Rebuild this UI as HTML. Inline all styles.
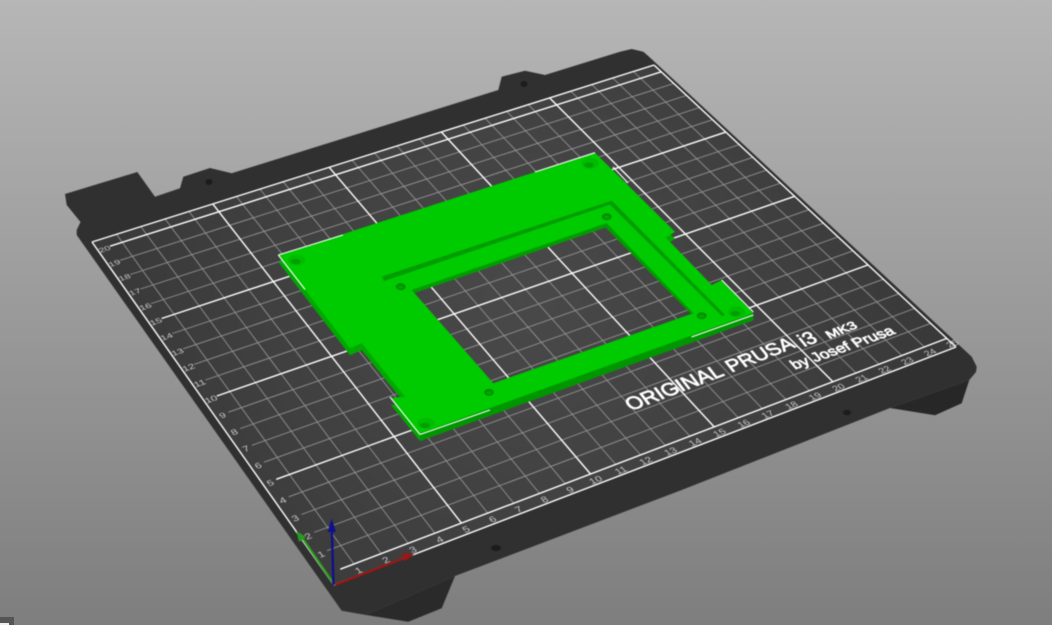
<!DOCTYPE html>
<html><head><meta charset="utf-8"><style>
html,body{margin:0;padding:0;width:1052px;height:625px;overflow:hidden;background:#999}
svg{display:block;position:absolute;left:0;top:0}
#s{filter:blur(.4px)}
#c{position:absolute;left:0;top:617px;width:14px;height:8px;background:#555}
#c i{position:absolute;left:0;top:6px;width:9px;height:2px;background:#eee}
text{font-family:"Liberation Sans",sans-serif;fill:#fff}
.l text{font-size:4px;text-anchor:middle;fill:#e4e4e4;opacity:.82}
.b text{stroke:#fff;stroke-width:.36}
.t line{stroke:#969696;stroke-width:.85}
.k line{stroke:#fff;stroke-width:1.4}
</style></head><body>
<svg width="1052" height="625" viewBox="0 0 1052 625" xmlns="http://www.w3.org/2000/svg">
<defs>
<linearGradient id="bg" x1="0" y1="0" x2="0" y2="1"><stop offset="0" stop-color="#b6b6b6"/><stop offset="1" stop-color="#7e7e7e"/></linearGradient>
<radialGradient id="gr" gradientUnits="userSpaceOnUse" cx="520" cy="300" r="420"><stop offset="0" stop-color="#494949"/><stop offset=".6" stop-color="#404040"/><stop offset="1" stop-color="#393939"/></radialGradient>
</defs>
<rect width="1052" height="625" fill="url(#bg)"/>
<g id="s">
<!-- feet -->
<polygon points="455,576 441.7,608.3 408.3,621.7 366,615" fill="#2a2a2a"/>
<polygon points="890,408 969.3,380 961.7,403.3 935,415.3" fill="#272727"/>
<!-- plate -->
<polygon fill="#303030" points="65,194 137.3,172 155,196.7 180,188.3 183.3,176.7 210,168 231.7,173.3 498.3,90 501.7,76.7 525,70.7 545,75 620,51.7 631.7,49 643.3,51.7 648,55.7 971.7,356.7 976.7,366.7 976,372 969.3,380 890,408 681.7,490 455,576 366,615 341.7,610.7 76.7,235 76.7,230 80.5,222 66.7,205"/>
<polygon points="92,242 654,65 956,347 334,585" fill="url(#gr)"/>
<g fill="#1c1c1c"><ellipse cx="524" cy="84" rx="3.5" ry="3"/><ellipse cx="209" cy="182" rx="3.5" ry="3"/><ellipse cx="847" cy="412.5" rx="4" ry="2.8"/><ellipse cx="496" cy="548" rx="5" ry="3"/></g>
<!-- thin horizontal lines -->
<g class="t">
<line x1="327.1" y1="550.7" x2="930.7" y2="323.3"/><line x1="314.1" y1="532.4" x2="914.7" y2="308.4"/><line x1="301.3" y1="514.5" x2="899" y2="293.7"/><line x1="288.7" y1="496.8" x2="883.4" y2="279.2"/>
<line x1="264" y1="462.2" x2="853" y2="250.8"/><line x1="251.9" y1="445.3" x2="838.1" y2="236.9"/><line x1="240.1" y1="428.6" x2="823.4" y2="223.2"/><line x1="228.3" y1="412.2" x2="808.9" y2="209.7"/>
<line x1="205.4" y1="380" x2="780.5" y2="183.1"/><line x1="194.2" y1="364.3" x2="766.5" y2="170.1"/><line x1="183.2" y1="348.8" x2="752.8" y2="157.3"/><line x1="172.3" y1="333.5" x2="739.2" y2="144.6"/>
<line x1="151" y1="303.6" x2="712.6" y2="119.7"/><line x1="140.5" y1="289" x2="699.5" y2="107.5"/><line x1="130.2" y1="274.5" x2="686.6" y2="95.4"/><line x1="120.1" y1="260.3" x2="673.8" y2="83.5"/>
<!-- thin vertical lines -->
<line x1="116.5" y1="234.3" x2="354" y2="564"/><line x1="140.9" y1="226.6" x2="381.2" y2="553.6"/><line x1="165.1" y1="219" x2="408.2" y2="543.4"/><line x1="189" y1="211.4" x2="434.9" y2="533.2"/>
<line x1="236.5" y1="196.5" x2="487.7" y2="513.1"/><line x1="259.9" y1="189.1" x2="513.7" y2="503.2"/><line x1="283.2" y1="181.8" x2="539.5" y2="493.4"/><line x1="306.3" y1="174.5" x2="565.1" y2="483.7"/>
<line x1="352" y1="160.1" x2="615.7" y2="464.4"/><line x1="374.6" y1="153" x2="640.6" y2="454.9"/><line x1="397" y1="145.9" x2="665.4" y2="445.5"/><line x1="419.3" y1="138.9" x2="689.9" y2="436.2"/>
<line x1="463.3" y1="125" x2="738.3" y2="417.8"/><line x1="485.1" y1="118.2" x2="762.3" y2="408.7"/><line x1="506.8" y1="111.4" x2="786" y2="399.6"/><line x1="528.3" y1="104.6" x2="809.5" y2="390.7"/>
<line x1="570.8" y1="91.2" x2="856" y2="373"/><line x1="591.8" y1="84.6" x2="879" y2="364.2"/><line x1="612.7" y1="78" x2="901.8" y2="355.6"/><line x1="633.4" y1="71.5" x2="924.4" y2="347"/>
</g>
<!-- thick lines -->
<g class="k">
<line x1="276.2" y1="479.3" x2="868.1" y2="264.9"/><line x1="216.8" y1="396" x2="794.6" y2="196.3"/><line x1="161.6" y1="318.5" x2="725.8" y2="132.1"/>
<line x1="212.8" y1="203.9" x2="461.4" y2="523.1"/><line x1="329.2" y1="167.3" x2="590.5" y2="474"/><line x1="441.4" y1="132" x2="714.2" y2="426.9"/><line x1="549.6" y1="97.9" x2="832.9" y2="381.8"/>
<line x1="340.3" y1="569.2" x2="946.8" y2="338.4"/><line x1="110" y1="246.2" x2="661.2" y2="71.8"/>
<line x1="92" y1="242" x2="654" y2="65"/><line x1="654" y1="65" x2="956" y2="347"/><line x1="956" y1="347" x2="334" y2="585"/><line x1="92" y1="242" x2="334" y2="585"/>
</g>
<!-- x labels -->
<g class="l">
<text transform="matrix(2.68 -1.03 1.42 1.87 357.8 569.2)" y="2">1</text>
<text transform="matrix(2.68 -1.03 1.42 1.87 385 558.8)" y="2">2</text>
<text transform="matrix(2.68 -1.03 1.42 1.87 412 548.5)" y="2">3</text>
<text transform="matrix(2.68 -1.03 1.42 1.87 438.8 538.3)" y="2">4</text>
<text transform="matrix(2.68 -1.03 1.42 1.87 465.3 528.1)" y="2">5</text>
<text transform="matrix(2.58 -.99 1.48 1.79 491.6 518.1)" y="2">6</text>
<text transform="matrix(2.58 -.99 1.48 1.79 517.7 508.2)" y="2">7</text>
<text transform="matrix(2.58 -.99 1.48 1.79 543.5 498.3)" y="2">8</text>
<text transform="matrix(2.58 -.99 1.48 1.79 569.2 488.6)" y="2">9</text>
<text transform="matrix(2.58 -.99 1.48 1.79 594.6 478.8)" y="2">10</text>
<text transform="matrix(2.48 -.95 1.54 1.72 619.9 469.2)" y="2">11</text>
<text transform="matrix(2.48 -.95 1.54 1.72 644.8 459.7)" y="2">12</text>
<text transform="matrix(2.48 -.95 1.54 1.72 669.6 450.2)" y="2">13</text>
<text transform="matrix(2.48 -.95 1.54 1.72 694.2 440.9)" y="2">14</text>
<text transform="matrix(2.48 -.95 1.54 1.72 718.5 431.6)" y="2">15</text>
<text transform="matrix(2.38 -.91 1.6 1.65 742.7 422.4)" y="2">16</text>
<text transform="matrix(2.38 -.91 1.6 1.65 766.7 413.3)" y="2">17</text>
<text transform="matrix(2.38 -.91 1.6 1.65 790.4 404.2)" y="2">18</text>
<text transform="matrix(2.38 -.91 1.6 1.65 814 395.2)" y="2">19</text>
<text transform="matrix(2.38 -.91 1.6 1.65 837.4 386.3)" y="2">20</text>
<text transform="matrix(2.28 -.87 1.66 1.57 860.5 377.4)" y="2">21</text>
<text transform="matrix(2.28 -.87 1.66 1.57 883.5 368.6)" y="2">22</text>
<text transform="matrix(2.28 -.87 1.66 1.57 906.3 359.9)" y="2">23</text>
<text transform="matrix(2.28 -.87 1.66 1.57 929 351.3)" y="2">24</text>
<text transform="matrix(2.28 -.87 1.66 1.57 951.4 342.7)" y="2">25</text>
<!-- y labels -->
<text transform="matrix(2.72 -1.03 1.29 1.83 320.3 553.2)" y="2">1</text>
<text transform="matrix(2.72 -1.03 1.29 1.83 307.3 535)" y="2">2</text>
<text transform="matrix(2.72 -1.03 1.29 1.83 294.5 517)" y="2">3</text>
<text transform="matrix(2.72 -1.03 1.29 1.83 281.9 499.2)" y="2">4</text>
<text transform="matrix(2.66 -.97 1.22 1.73 269.6 481.8)" y="2">5</text>
<text transform="matrix(2.66 -.97 1.22 1.73 257.4 464.5)" y="2">6</text>
<text transform="matrix(2.66 -.97 1.22 1.73 245.3 447.6)" y="2">7</text>
<text transform="matrix(2.66 -.97 1.22 1.73 233.5 430.9)" y="2">8</text>
<text transform="matrix(2.6 -.91 1.15 1.63 221.8 414.4)" y="2">9</text>
<text transform="matrix(2.6 -.91 1.15 1.63 210.3 398.2)" y="2">10</text>
<text transform="matrix(2.6 -.91 1.15 1.63 199 382.2)" y="2">11</text>
<text transform="matrix(2.6 -.91 1.15 1.63 187.8 366.5)" y="2">12</text>
<text transform="matrix(2.54 -.86 1.08 1.53 176.8 351)" y="2">13</text>
<text transform="matrix(2.54 -.86 1.08 1.53 165.9 335.7)" y="2">14</text>
<text transform="matrix(2.54 -.86 1.08 1.53 155.2 320.6)" y="2">15</text>
<text transform="matrix(2.54 -.86 1.08 1.53 144.7 305.7)" y="2">16</text>
<text transform="matrix(2.48 -.8 1.01 1.44 134.3 291)" y="2">17</text>
<text transform="matrix(2.48 -.8 1.01 1.44 124 276.5)" y="2">18</text>
<text transform="matrix(2.48 -.8 1.01 1.44 113.9 262.3)" y="2">19</text>
<text transform="matrix(2.48 -.8 1.01 1.44 103.9 248.2)" y="2">20</text>
</g>
<!-- printed sheet text -->
<g class="b">
<text transform="matrix(2.1 -.8 1.3 1.68 631 411)" font-size="9.4">ORIGINAL</text>
<text transform="matrix(2 -.79 1.3 1.6 731.5 372.5)" font-size="9.4">PRUSA</text>
<text transform="matrix(2 -.76 1.3 1.6 804 347)" font-size="9.6">i3</text>
<text transform="matrix(2.2 -.88 1.25 1.5 829.5 339)" font-size="6.4">MK3</text>
<text transform="matrix(2.04 -.73 1.3 1.5 795 369.5)" font-size="7.5">by Josef Prusa</text>
</g>
<!-- green part: sides -->
<path fill="#00a800" fill-rule="evenodd" d="M278.3,262 L595,159.7 L675,238.7 L666,244.7 L711.7,292 L721.7,287 L753.3,320.3 L420,441 L391,405 L405,403.7 L361.7,350.3 L350,355.3 Z M411.7,290 L606.7,223.3 L693.3,313.3 L493.3,383.3 Z"/>
<polygon points="753.3,313.3 753.3,320.3 420,441 420,433.3" fill="#009600"/>
<!-- green part: top -->
<path fill="#00ca00" fill-rule="evenodd" d="M278.3,255 L595,152.7 L675,231.7 L666,237.7 L711.7,285 L721.7,280 L753.3,313.3 L420,433.3 L391,398 L405,396.7 L361.7,343.3 L350,348.3 Z M411.7,290 L606.7,223.3 L693.3,313.3 L493.3,383.3 Z"/>
<!-- window walls and groove -->
<polygon points="411.7,290 606.7,223.3 693.3,313.3 691,314 605.5,227.5 414.5,293" fill="#009c00"/>
<polygon points="381.7,276.7 611.7,200.7 725,315 722,316 610,204.5 384,281" fill="#009c00"/>
<!-- holes -->
<g fill="#00bc00">
<ellipse cx="296.7" cy="260" rx="8.5" ry="5.5"/><ellipse cx="590" cy="163.3" rx="8.5" ry="5.5"/><ellipse cx="736.7" cy="311.7" rx="8.5" ry="5.5"/><ellipse cx="426" cy="423.5" rx="8.5" ry="5.5"/>
</g>
<g fill="#00a000">
<ellipse cx="295.5" cy="261.5" rx="5" ry="2.6"/><ellipse cx="589" cy="165" rx="5" ry="2.6"/><ellipse cx="735.5" cy="313.5" rx="5" ry="2.6"/><ellipse cx="425" cy="425.5" rx="5" ry="2.6"/>
</g>
<g fill="#008c00">
<ellipse cx="400.7" cy="286.7" rx="4.8" ry="3.4"/><ellipse cx="606.7" cy="216.7" rx="4.8" ry="3.4"/><ellipse cx="701.7" cy="315.7" rx="4.8" ry="3.4"/><ellipse cx="489" cy="392.3" rx="4.8" ry="3.4"/>
</g>
<g fill="#00aa00">
<ellipse cx="400.7" cy="287.2" rx="2.8" ry="1.7"/><ellipse cx="606.7" cy="217.2" rx="2.8" ry="1.7"/><ellipse cx="701.7" cy="316.2" rx="2.8" ry="1.7"/><ellipse cx="489" cy="392.8" rx="2.8" ry="1.7"/>
</g>
<!-- white edge sparkles -->
<g stroke="#fff" stroke-width="1.1" fill="none">
<path d="M278.3,255 L343,235"/><path d="M535,172 L595,152.7"/><path d="M278.3,255 L305,289.5"/><path d="M613,167 L628,183"/>
<path d="M691.5,337 L753.3,315"/><path d="M420,434.5 L490,410"/><path d="M390,397 L420,434.5"/><path d="M721.7,280 L753.3,312"/>
</g>
<!-- axes -->
<line x1="334" y1="584" x2="301" y2="536" stroke="#2a9a1e" stroke-width="2.2"/>
<polygon points="296.5,531 306,537 299,542" fill="#2a9a1e"/>
<line x1="335" y1="585" x2="404" y2="558" stroke="#a01414" stroke-width="2.2"/>
<polygon points="414,554.5 402,553 405,561" fill="#a01414"/>
<line x1="333.5" y1="585" x2="331.8" y2="530" stroke="#10108c" stroke-width="2.4"/>
<polygon points="331.7,518.5 327.5,532 336,532" fill="#10108c"/>
</g>
</svg>
<div id="c"><i></i></div>
</body></html>
